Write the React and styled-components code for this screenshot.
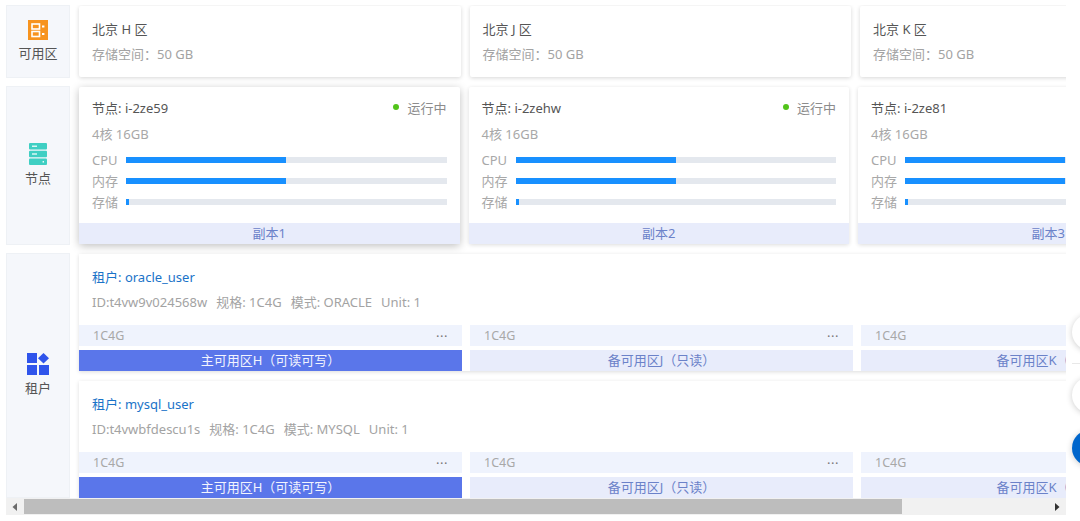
import styled, { createGlobalStyle } from "styled-components";

const zones = [
  { name: "北京 H 区" },
  { name: "北京 J 区" },
  { name: "北京 K 区" },
];

const nodes = [
  { name: "i-2ze59", replica: "副本1" },
  { name: "i-2zehw", replica: "副本2" },
  { name: "i-2ze81", replica: "副本3" },
];

const meters = [
  { label: "CPU", value: 50 },
  { label: "内存", value: 50 },
  { label: "存储", value: 1 },
];

const tenants = [
  {
    name: "oracle_user",
    info: ["ID:t4vw9v024568w", "规格: 1C4G", "模式: ORACLE", "Unit: 1"],
  },
  {
    name: "mysql_user",
    info: ["ID:t4vwbfdescu1s", "规格: 1C4G", "模式: MYSQL", "Unit: 1"],
  },
];

const units = [
  { label: "主可用区H（可读可写）", primary: true },
  { label: "备可用区J（只读）" },
  { label: "备可用区K（只读）" },
];

const ZoneIcon = () => (
  <svg width="20" height="20" viewBox="0 0 20 20">
    <rect width="20" height="20" fill="#f7931e" />
    <rect x="4" y="4" width="7.5" height="5" fill="none" stroke="#fff" strokeWidth="1.6" />
    <rect x="4" y="11.5" width="7.5" height="5" fill="none" stroke="#fff" strokeWidth="1.6" />
    <rect x="14" y="5.5" width="2.4" height="2" fill="#fff" />
    <rect x="14" y="13" width="2.4" height="2" fill="#fff" />
  </svg>
);

const NodeIcon = () => (
  <svg width="18" height="22" viewBox="0 0 18 22">
    <rect y="0" width="18" height="6.4" rx="1" fill="#3fcfc3" />
    <rect y="7.8" width="18" height="6.4" rx="1" fill="#3fcfc3" />
    <rect y="15.6" width="18" height="6.4" rx="1" fill="#3fcfc3" />
    <rect x="3" y="2.6" width="5" height="1.2" fill="#fff" />
    <rect x="3" y="10.4" width="5" height="1.2" fill="#fff" />
    <rect x="13.6" y="18.1" width="1.4" height="1.4" fill="#fff" />
  </svg>
);

const TenantIcon = () => (
  <svg width="22" height="22" viewBox="0 0 22 22">
    <rect x="0" y="0" width="10" height="10" fill="#2f54eb" />
    <path d="M16.5 0 L22 5.2 L16.5 10.4 L11 5.2 Z" fill="#2f54eb" />
    <rect x="0" y="12" width="10" height="10" fill="#2f54eb" />
    <rect x="12" y="12" width="10" height="10" fill="#2f54eb" />
  </svg>
);

const App = () => {
  return (
    <Page>
      <GlobalStyle />
      <Viewport>
        <Row $height={73}>
          <SideCell>
            <ZoneIcon />
            <SideLabel>可用区</SideLabel>
          </SideCell>
          <Cards>
            {zones.map((zone) => (
              <ZoneCard key={zone.name}>
                <ZoneName>{zone.name}</ZoneName>
                <MutedText>存储空间：50 GB</MutedText>
              </ZoneCard>
            ))}
          </Cards>
        </Row>
        <Row $height={159}>
          <SideCell>
            <NodeIcon />
            <SideLabel>节点</SideLabel>
          </SideCell>
          <Cards>
            {nodes.map((node, i) => (
              <NodeCard key={node.name} $raised={i === 0}>
                <NodeBody>
                  <NodeHead>
                    <NodeName>节点: {node.name}</NodeName>
                    <Status>运行中</Status>
                  </NodeHead>
                  <NodeSpec>4核 16GB</NodeSpec>
                  {meters.map((meter) => (
                    <Meter key={meter.label}>
                      <MeterLabel>{meter.label}</MeterLabel>
                      <MeterTrack>
                        <MeterFill style={{ width: `${meter.value}%` }} />
                      </MeterTrack>
                    </Meter>
                  ))}
                </NodeBody>
                <Replica>{node.replica}</Replica>
              </NodeCard>
            ))}
          </Cards>
        </Row>
        <Row $height={245}>
          <SideCell>
            <TenantIcon />
            <SideLabel>租户</SideLabel>
          </SideCell>
          <TenantList>
            {tenants.map((tenant) => (
              <TenantCard key={tenant.name}>
                <TenantHead>
                  <TenantName>租户: {tenant.name}</TenantName>
                  <TenantInfo>
                    {tenant.info.map((item) => (
                      <span key={item}>{item}</span>
                    ))}
                  </TenantInfo>
                </TenantHead>
                <Units>
                  {units.map((unit) => (
                    <Unit key={unit.label}>
                      <UnitSpec>
                        <span>1C4G</span>
                        <Dots>···</Dots>
                      </UnitSpec>
                      <UnitRole $primary={unit.primary}>{unit.label}</UnitRole>
                    </Unit>
                  ))}
                </Units>
              </TenantCard>
            ))}
          </TenantList>
        </Row>
      </Viewport>
      <ScrollBar>
        <ScrollArrow>
          <svg width="6" height="8" viewBox="0 0 6 8">
            <path d="M5 0 L0.5 4 L5 8 Z" fill="#6b6b6b" />
          </svg>
        </ScrollArrow>
        <ScrollThumb />
        <ScrollArrow>
          <svg width="6" height="8" viewBox="0 0 6 8">
            <path d="M1 0 L5.5 4 L1 8 Z" fill="#333" />
          </svg>
        </ScrollArrow>
      </ScrollBar>
      <FloatButton $top={314} />
      <FloatDivider />
      <FloatButton $top={377} />
      <FloatButton $top={430} $blue />
    </Page>
  );
};

const GlobalStyle = createGlobalStyle`
  html, body {
    margin: 0;
    height: 100%;
    overflow: hidden;
    background: #fff;
  }
  * {
    box-sizing: border-box;
  }
`;

const Page = styled.div`
  position: relative;
  width: 1080px;
  height: 521px;
  padding: 5px 14px 0 6px;
  overflow: hidden;
  font-family: "Noto Sans", "Noto Sans CJK SC", sans-serif;
  font-size: 13px;
  background: #fff;
`;

const Viewport = styled.div`
  display: flex;
  flex-direction: column;
  gap: 8px;
  height: 493px;
  overflow: hidden;
`;

const Row = styled.div`
  display: flex;
  flex: none;
  gap: 9px;
  height: ${(props) => props.$height}px;
`;

const SideCell = styled.div`
  display: flex;
  flex: none;
  flex-direction: column;
  align-items: center;
  justify-content: center;
  gap: 4px;
  width: 64px;
  padding-bottom: 2px;
  background: #f5f7fb;
  border: 1px solid #eef1f5;
`;

const SideLabel = styled.div`
  font-size: 13px;
  line-height: 18px;
  color: #555;
`;

const Cards = styled.div`
  display: flex;
  gap: 9px;
  padding: 1px 0;
`;

const ZoneCard = styled.div`
  display: flex;
  flex: none;
  flex-direction: column;
  gap: 7px;
  width: 381.5px;
  padding: 14px 13px 0;
  background: #fff;
  border-radius: 2px;
  box-shadow: 0 1px 4px rgba(0, 0, 0, 0.16);
`;

const ZoneName = styled.div`
  font-size: 13px;
  line-height: 18px;
  color: #555;
`;

const MutedText = styled.div`
  font-size: 13px;
  line-height: 18px;
  color: #a3a3a3;
`;

const NodeCard = styled.div`
  display: flex;
  flex: none;
  flex-direction: column;
  width: 380.5px;
  background: #fff;
  border-radius: 2px;
  box-shadow: ${(props) =>
    props.$raised
      ? "0 2px 8px rgba(0, 0, 0, 0.25)"
      : "0 1px 4px rgba(0, 0, 0, 0.14)"};
`;

const NodeBody = styled.div`
  flex: 1;
  padding: 11px 13px 0;
`;

const NodeHead = styled.div`
  display: flex;
  align-items: center;
  justify-content: space-between;
  height: 18px;
`;

const NodeName = styled.div`
  font-size: 13px;
  color: #555;
`;

const Status = styled.div`
  display: flex;
  align-items: center;
  gap: 8px;
  font-size: 13px;
  color: #8c8c8c;

  &::before {
    content: "";
    width: 6px;
    height: 6px;
    border-radius: 50%;
    background: #52c41a;
  }
`;

const NodeSpec = styled.div`
  margin: 9px 0 6px;
  font-size: 13px;
  line-height: 18px;
  color: #a8a8a8;
`;

const Meter = styled.div`
  display: flex;
  align-items: center;
  height: 21px;
`;

const MeterLabel = styled.div`
  flex: none;
  width: 34px;
  font-size: 13px;
  color: #a8a8a8;
`;

const MeterTrack = styled.div`
  flex: 1;
  height: 6px;
  background: #e4e8ee;
`;

const MeterFill = styled.div`
  height: 100%;
  min-width: 3px;
  background: #1890ff;
`;

const Replica = styled.div`
  height: 21px;
  font-size: 13px;
  line-height: 21px;
  text-align: center;
  color: #6b82c9;
  background: #e8ecfb;
`;

const TenantList = styled.div`
  display: flex;
  flex-direction: column;
  gap: 10px;
  padding-top: 1px;
`;

const TenantCard = styled.div`
  flex: none;
  width: 1170px;
  height: 117px;
  background: #fff;
  box-shadow: 0 1px 4px rgba(0, 0, 0, 0.14);
`;

const TenantHead = styled.div`
  height: 71px;
  padding: 14px 13px 0;
`;

const TenantName = styled.div`
  font-size: 13px;
  line-height: 18px;
  color: #1a73c8;
`;

const TenantInfo = styled.div`
  display: flex;
  gap: 9px;
  margin-top: 7px;
  font-size: 13px;
  line-height: 18px;
  color: #a3a3a3;
`;

const Units = styled.div`
  display: flex;
  gap: 8px;
`;

const Unit = styled.div`
  display: flex;
  flex: none;
  flex-direction: column;
  gap: 4px;
  width: 383px;
`;

const UnitSpec = styled.div`
  display: flex;
  align-items: center;
  justify-content: space-between;
  height: 21px;
  padding: 0 14px;
  font-size: 12.5px;
  color: #a8a8a8;
  background: #eff3fd;
`;

const Dots = styled.span`
  font-size: 13px;
  letter-spacing: 0.5px;
  color: #777;
`;

const UnitRole = styled.div`
  height: 21px;
  font-size: 13px;
  line-height: 21px;
  text-align: center;
  color: ${(props) => (props.$primary ? "#f2f4fe" : "#6b82c9")};
  background: ${(props) => (props.$primary ? "#5a76ea" : "#e8ecfb")};
`;

const ScrollBar = styled.div`
  display: flex;
  align-items: center;
  height: 17px;
  background: #f1f1f1;
`;

const ScrollArrow = styled.div`
  display: flex;
  flex: none;
  align-items: center;
  justify-content: center;
  width: 18px;
  height: 100%;
`;

const ScrollThumb = styled.div`
  flex: none;
  width: 878px;
  height: 15px;
  margin-right: 146px;
  background: #bdbdbd;
`;

const FloatButton = styled.div`
  position: absolute;
  top: ${(props) => props.$top}px;
  left: 1072px;
  width: 36px;
  height: 36px;
  border-radius: 50%;
  background: ${(props) => (props.$blue ? "#0066cc" : "#fff")};
  box-shadow: 0 1px 6px rgba(0, 0, 0, 0.2);
`;

const FloatDivider = styled.div`
  position: absolute;
  top: 363px;
  left: 1072px;
  width: 8px;
  height: 1px;
  background: #e8e8e8;
`;

export default App;
